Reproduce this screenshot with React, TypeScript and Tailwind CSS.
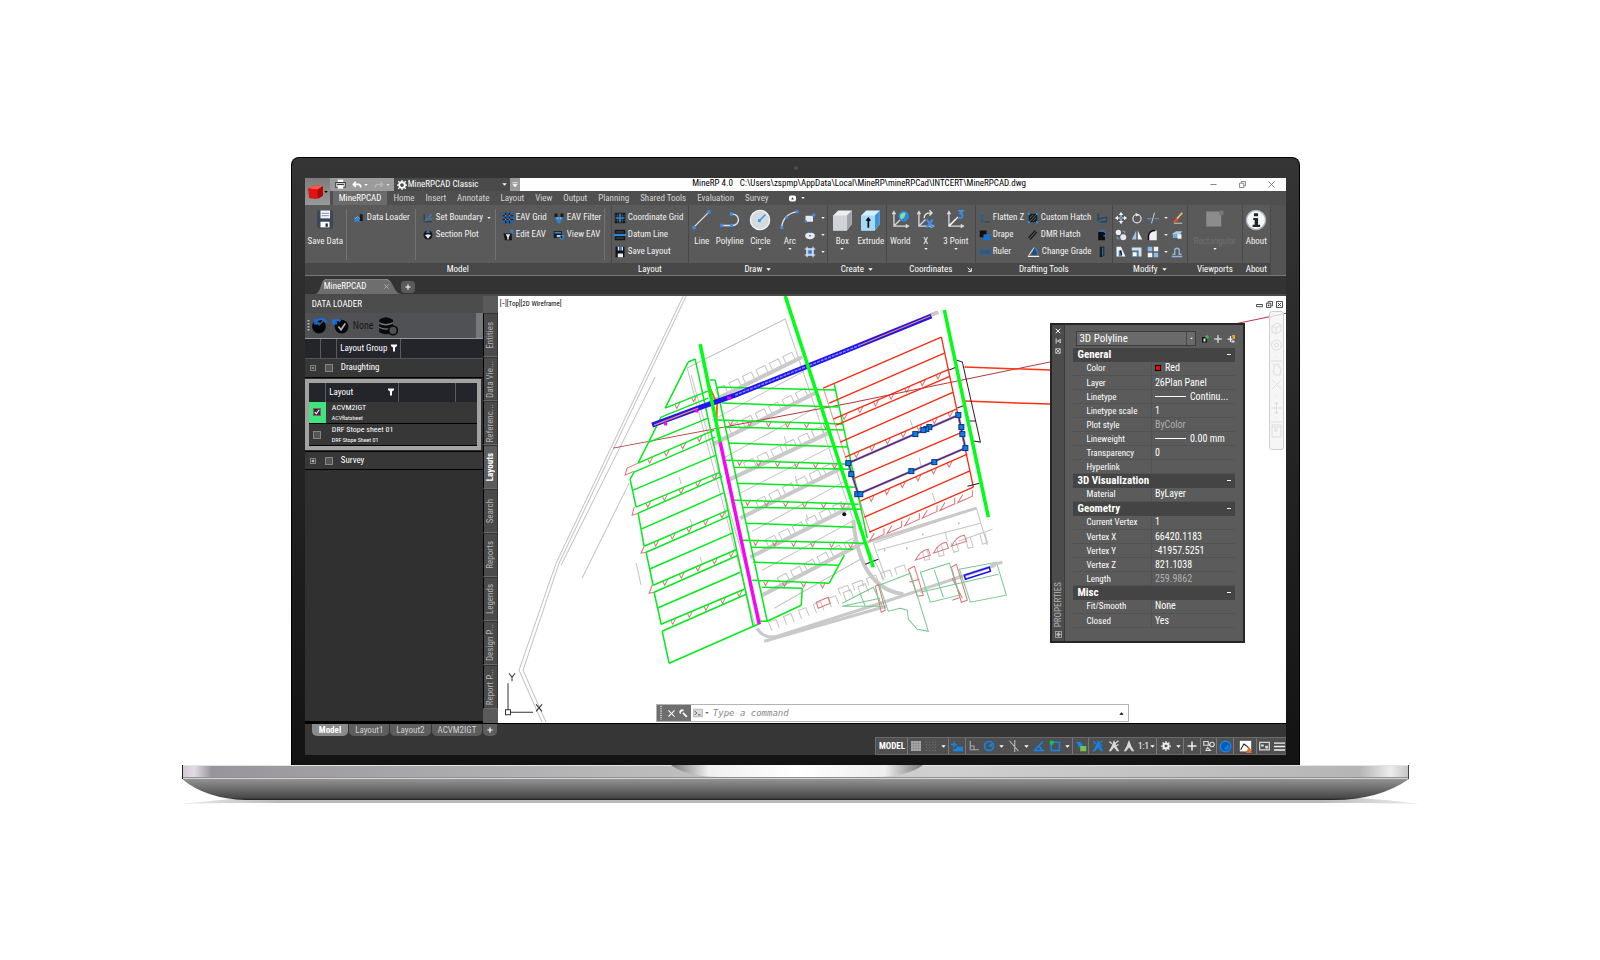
import type { ReactNode } from "react";

type Kids = { children: ReactNode };

/* ---------- small drawing helpers ---------- */

function Icon({ children, className = "size-[12px]" }: Kids & { className?: string }) {
  return (
    <svg viewBox="0 0 16 16" className={`shrink-0 ${className}`} fill="none" aria-hidden="true">
      {children}
    </svg>
  );
}

const Caret = ({ className = "size-[5px]" }: { className?: string }) => (
  <Icon className={className}>
    <path d="M1 4h14l-7 8z" fill="currentColor" />
  </Icon>
);

const BLUE = "#2f86d6";

/* ---------- ribbon icons ---------- */

const SaveBig = () => (
  <Icon className="h-[21px] w-[18px]">
    <path d="M1 0h14v16H2.500l-1.500-1.500z" fill="#3b4658" />
    <path d="M4 0h8.500v7H4z" fill="#f1f4f8" />
    <path d="M5 2.500h6.500M5 4.500h6.500" stroke="#9aa6b5" />
    <path d="M4 10h8v5H4z" fill="#fff" />
    <path d="M8.500 11.500h2v3h-2z" fill="#1d2430" />
  </Icon>
);
const DataLoad = () => (
  <Icon>
    <path d="M2 7h7v6H2z" fill={BLUE} />
    <path d="M9 3h4v9H9z" fill="#1b1b1b" />
    <path d="M3 9l3-3 3 3" stroke="#8cc4f5" />
  </Icon>
);
const Boundary = () => (
  <Icon>
    <path d="M3 3v10h10" stroke="#3a4149" strokeWidth="2" />
    <path d="M4 12l4-4M9 7l4-4M10 8l3 2" stroke={BLUE} strokeWidth="1.500" />
  </Icon>
);
const Section = () => (
  <Icon>
    <circle cx="8" cy="8" r="6" fill="#151515" />
    <path d="M8 1l3 4H5z" fill={BLUE} />
    <path d="M4 8l4 5 4-5-4-1z" fill="#e8eef4" />
  </Icon>
);
const EavGrid = () => (
  <Icon>
    <path d="M1 1h14v14H1z" fill="#1665b5" />
    <path d="M1 5h14M1 10h14M5 1v14M10 1v14" stroke="#15181c" strokeWidth="1.500" />
    <path d="M4 4h2v2H4zM9 9h2v2H9zM9 4h2v2H9zM4 9h2v2H4z" fill="#e0743a" />
  </Icon>
);
const EavFilter = () => (
  <Icon>
    <path d="M2 2h4v5H2zM10 2h4v5h-4z" fill="#1c1c1c" />
    <path d="M3 7h10v2l-3 3v3H6v-3L3 9z" fill={BLUE} />
    <path d="M5 8h2M9 8h2" stroke="#fff" />
  </Icon>
);
const EditEav = () => (
  <Icon>
    <path d="M2 6h11v9H4z" fill="#121212" />
    <path d="M5 7h6l-2 4v3H7v-3z" fill="#e9eef3" />
    <path d="M10 1h5v5h-2z" fill={BLUE} />
  </Icon>
);
const ViewEav = () => (
  <Icon>
    <path d="M1 3h11v9H1z" fill="#16191d" />
    <path d="M2 5h9" stroke={BLUE} strokeWidth="2" />
    <path d="M5 8h6l-2 3H5z" fill="#bfcad6" />
    <circle cx="12" cy="11" r="2.500" stroke={BLUE} strokeWidth="1.500" />
  </Icon>
);
const CoordGrid = () => (
  <Icon>
    <path d="M1 1h14v14H1z" fill="#14171b" />
    <path d="M1 5h14M1 11h14M5 1v14M11 1v14" stroke="#46505a" />
    <path d="M8 2v12M2 8h12" stroke={BLUE} strokeWidth="2" />
  </Icon>
);
const Datum = () => (
  <Icon>
    <path d="M1 1h14v14H1z" fill="#14171b" />
    <path d="M3 4h10M3 12h10" stroke="#56616c" />
    <path d="M0 8h16" stroke={BLUE} strokeWidth="3" />
  </Icon>
);
const SaveSmall = () => (
  <Icon>
    <path d="M2 1h12v14H2z" fill="#111" />
    <path d="M5 1h2v5H5zM10 1h2v5h-2zM5 10h7v5H5z" fill="#e8edf2" />
    <path d="M7 1h3v5H7z" fill={BLUE} />
  </Icon>
);
const LineI = () => (
  <Icon className="size-[21px]">
    <path d="M2 14L14 2" stroke="#dfe5ea" />
    <path d="M1 13h2.500v2.500H1zM12.500 1H15v2.500h-2.500z" fill="#3d8ef0" />
  </Icon>
);
const PolyI = () => (
  <Icon className="size-[21px]">
    <path d="M2 12.500h8.500a4.300 4.300 0 0 0 0-8.600H9" stroke="#dfe5ea" strokeWidth="1.100" />
    <path d="M1 11.300h2.400v2.400H1zM8.300 11.300h2.400v2.400H8.300zM8.300 2.700h2.400v2.400H8.300z" fill="#3d8ef0" />
  </Icon>
);
const CircleI = () => (
  <Icon className="size-[22px]">
    <circle cx="8" cy="8" r="7" fill="#d5dade" stroke="#f2f4f5" />
    <path d="M7.500 8.500L12 4" stroke="#3d8ef0" strokeWidth="1.100" />
    <path d="M6.500 7.500h2v2h-2z" fill="#3d8ef0" />
  </Icon>
);
const ArcI = () => (
  <Icon className="size-[21px]">
    <path d="M2 14.500C2.500 7.500 7 3 14 2" stroke="#dfe5ea" strokeWidth="1.100" />
    <path d="M1 13h2.300v2.300H1zM12.700 1H15v2.300h-2.300zM4.800 5.500h2v2h-2z" fill="#3d8ef0" />
  </Icon>
);
const RectI = () => (
  <Icon>
    <path d="M2 5h10v8H2z" fill="#e7ebee" />
    <path d="M11 2h4v4h-4zM1 11h3v3H1z" fill="#3d8ef0" />
  </Icon>
);
const EllipseI = () => (
  <Icon>
    <ellipse cx="8" cy="9" rx="6.500" ry="4.500" fill="#e7ebee" />
    <path d="M6.500 2h3v3h-3zM7 8h2v2H7z" fill="#2d6fb8" />
  </Icon>
);
const HatchI = () => (
  <Icon>
    <path d="M3 3h10v10H3z" fill="#8bb8e8" />
    <path d="M4 1v14M12 1v14M1 4h14M1 12h14" stroke="#dfe9f5" strokeWidth="1.500" />
    <path d="M6 6h4v4H6z" fill="#3277c4" />
  </Icon>
);
const BoxI = () => (
  <Icon className="size-[23px]">
    <path d="M1.500 4.500L5 1h9.500v9.500L11 15H1.500z" fill="#eceef0" />
    <path d="M11 15V4.500L14.500 1v9.500z" fill="#9fa3a8" />
    <path d="M1.500 4.500H11V15H1.500z" fill="#cfd2d7" />
  </Icon>
);
const ExtrudeI = () => (
  <Icon className="size-[23px]">
    <path d="M1.500 4.500L5 1h9.500v9.500L11 15H1.500z" fill="#d6efff" />
    <path d="M11 15V4.500L14.500 1v9.500z" fill="#3f96d6" />
    <path d="M1.500 4.500H11V15H1.500z" fill="#a4d8f8" />
    <path d="M6.500 13V6.500M5.200 8.200l1.300-1.700 1.300 1.700" stroke="#0b0b0b" strokeWidth="1.200" />
  </Icon>
);
const Axes = ({ children }: Kids) => (
  <Icon className="size-[21px]">
    <path d="M3 2v11h11M3 13l5-5M1.800 4L3 2l1.200 2M12 11.800L14 13l-2 1.200" stroke="#d6d9dc" />
    {children}
  </Icon>
);
const WorldI = () => (
  <Axes>
    <circle cx="10.500" cy="5.500" r="4" fill="#2f86d6" />
    <path d="M8 4q2-2 4-1l-1 3-2 2q-2-1-1-4z" fill="#7fe0a8" />
  </Axes>
);
const XI = () => (
  <Axes>
    <path d="M7 7c0-4 3-4 5-4M11 1l2 2-2 2" stroke="#e5e7e9" />
    <path d="M9 8l4.500 6M13.500 8L9 14" stroke="#3d8ef0" strokeWidth="1.600" />
  </Axes>
);
const ThreeI = () => (
  <Axes>
    <path d="M3 13l7-7" stroke="#fff" />
    <path d="M10 1.500h3.500l-2 2q2.500.5 1.800 2.300-1 1.700-3.500.7" stroke="#3d8ef0" strokeWidth="1.300" />
  </Axes>
);
const FlattenI = () => (
  <Icon>
    <path d="M4 2v11h10" stroke="#3b434b" strokeWidth="2" />
    <path d="M2 2h4M4 3v8M3 13h6" stroke="#2a6ca8" strokeWidth="1.500" />
  </Icon>
);
const DrapeI = () => (
  <Icon>
    <path d="M1 2h9v9H1z" fill="#0e0e0e" />
    <path d="M6 7h9v8H6z" fill="#1673d0" />
  </Icon>
);
const RulerI = () => (
  <Icon>
    <path d="M1 4.500h14v7H1z" fill="#4c5258" stroke="#2266a3" strokeWidth="1.800" />
  </Icon>
);
const CustomHatchI = () => (
  <Icon>
    <path d="M3 3h10v10H3z" fill="#20242a" stroke="#0e0f10" />
    <path d="M4 12l8-8M4 8l4-4M8 12l4-4" stroke="#5a6672" />
    <path d="M1 1h3v3H1zM12 1h3v3h-3zM1 12h3v3H1zM12 12h3v3h-3z" fill={BLUE} />
  </Icon>
);
const DmrI = () => (
  <Icon>
    <path d="M3 13L12 3" stroke="#1b1b1b" strokeWidth="4.500" />
    <path d="M3 13L12 3" stroke="#6c737a" strokeWidth="1.200" />
  </Icon>
);
const GradeI = () => (
  <Icon className="size-[13px]">
    <path d="M1 14h14" stroke="#f0f2f4" strokeWidth="1.500" />
    <path d="M2 13L9 3" stroke="#dfe3e6" strokeWidth="1.300" />
    <path d="M9 3q4 3 4 9H6z" fill="#1d4d7c" />
    <path d="M9 3q4 3 4 9" stroke={BLUE} strokeWidth="1.500" />
  </Icon>
);
const SlopeI = () => (
  <Icon>
    <path d="M3 2v11h11V7L4 9" stroke="#23425f" strokeWidth="1.800" />
    <path d="M1 13h6M10 9h4" stroke="#2a6ca8" strokeWidth="1.500" />
  </Icon>
);
const BucketI = () => (
  <Icon>
    <path d="M3 4h9v11H3z" fill="#0d0d0d" />
    <path d="M5 3q4-3 7 2M10 9h3" stroke="#1d7be0" strokeWidth="1.800" />
  </Icon>
);
const PanelI = () => (
  <Icon>
    <path d="M5 1h6v12l-4 2H5z" fill="#1a1d20" />
    <path d="M9 2v11" stroke="#2f7f9e" strokeWidth="1.500" />
  </Icon>
);

const MoveI = () => (
  <Icon>
    <path d="M8 1v14M1 8h14" stroke="#e6e9ec" strokeWidth="1.300" />
    <path d="M8 0l3 4H5zM8 16l3-4H5zM0 8l4-3v6zM16 8l-4-3v6z" fill="#f3f5f6" />
    <path d="M6.500 6.500h3v3h-3z" fill="#3d8ef0" />
  </Icon>
);
const RotateI = () => (
  <Icon>
    <circle cx="8" cy="9" r="5.500" stroke="#d9dde0" strokeWidth="1.700" />
    <path d="M6 1l5 2.500L7 6z" fill="#e9ecee" />
  </Icon>
);
const TrimI = () => (
  <Icon>
    <path d="M0 9h6M10 9h6" stroke="#4aa0f0" strokeWidth="1.500" />
    <path d="M10 1L6 15" stroke="#cfd6dc" strokeWidth="1.300" />
  </Icon>
);
const EraseI = () => (
  <Icon>
    <path d="M15 1L7 10" stroke="#f0c070" strokeWidth="2.500" />
    <path d="M7 8l3 3-4 3H2z" fill="#e8482c" />
    <path d="M4 15h11" stroke="#f0f0f0" />
  </Icon>
);
const CopyI = () => (
  <Icon>
    <circle cx="4.500" cy="4.500" r="3.500" fill="#eceff1" />
    <circle cx="11" cy="11" r="4" fill="#e2e8ee" />
    <path d="M10 3h3v3M3 10v3h3" stroke="#8fb8e0" />
  </Icon>
);
const MirrorI = () => (
  <Icon>
    <path d="M7 2v12H1z" fill="#9fc6ea" />
    <path d="M9 2v12h6z" fill="#eef2f5" />
  </Icon>
);
const FilletI = () => (
  <Icon>
    <path d="M2 15V9q1-7 9-7h2v13z" fill="#eef1f3" />
    <path d="M2 15V9q1-7 9-7" stroke="#111" strokeWidth="2" />
  </Icon>
);
const ExplodeI = () => (
  <Icon>
    <path d="M2 6l5-3h8l-3 4v5H3z" fill="#a9cdec" />
    <path d="M9 7h5v6H9z" fill="#eaf2f9" />
    <path d="M3 7h5v5H3z" fill="#6aa8de" />
  </Icon>
);
const StretchI = () => (
  <Icon>
    <path d="M2 1h6l6 13H2z" fill="#f0f3f5" />
    <path d="M5 6h4v8H5z" fill="#3a7fc4" />
    <path d="M7 6l2 6" stroke="#101010" strokeWidth="1.500" />
  </Icon>
);
const ScaleI = () => (
  <Icon>
    <path d="M1 2h13v12h-4V6H1z" fill="#cfe2f3" />
    <path d="M2 8h6v6H2z" fill="#fff" stroke="#5b9bd8" />
  </Icon>
);
const ArrayI = () => (
  <Icon>
    <path d="M1 1h6v6H1zM9 9h6v6H9z" fill="#86bdf0" />
    <path d="M9 1h6v6H9zM1 9h6v6H1z" fill="#f0f3f5" />
  </Icon>
);
const OffsetI = () => (
  <Icon>
    <path d="M1 14h14M2 11h3V6a3 3 0 0 1 6 0v5h3" stroke="#8fb8e0" strokeWidth="1.800" />
  </Icon>
);
const ViewportI = () => (
  <Icon className="size-[20px]">
    <path d="M1 2h12v12H1z" fill="#8c8c8c" />
    <circle cx="13" cy="3" r="2" fill="#777" />
  </Icon>
);
const AboutI = () => (
  <Icon className="size-[22px]">
    <circle cx="8" cy="8" r="7" fill="#f4f6f7" stroke="#aab2b9" />
    <path d="M6.500 3h3v2.200h-3zM6 6.500h3.500v5H11V13H5.500v-1.500H7V8H6z" fill="#20262c" />
  </Icon>
);

/* ---------- ribbon structure ---------- */

function Group({ label, arrow, launcher, className, children }: Kids & { label: string; arrow?: boolean; launcher?: boolean; className: string }) {
  return (
    <section className={`flex shrink-0 flex-col border-r border-[#484848] ${className}`}>
      <div className="flex h-[58px] pt-[4px]">{children}</div>
      <h2 className="relative flex h-[12px] items-center justify-center gap-1 bg-[#484848] text-white">
        {label}
        {arrow && <Caret />}
        {launcher && (
          <Icon className="absolute right-[3px] size-[5px]">
            <path d="M2 2l10 10M14 4v10H4" stroke="#fff" strokeWidth="3" />
          </Icon>
        )}
      </h2>
    </section>
  );
}

function Small({ icon, label, arrow }: { icon: ReactNode; label: string; arrow?: boolean }) {
  return (
    <button className="flex h-[17px] items-center gap-[2px] whitespace-nowrap">
      {icon}
      {label}
      {arrow && <Caret className="ml-[2px] size-[4px]" />}
    </button>
  );
}

function Big({ icon, label, arrow, className, dim = false }: { icon: ReactNode; label: string; arrow?: boolean; className: string; dim?: boolean }) {
  return (
    <button className={`flex flex-col items-center ${className}`}>
      <span className="flex h-[27px] items-start">{icon}</span>
      <span className={dim ? "text-[#6f6f6f]" : ""}>{label}</span>
      {arrow && <Caret className="size-[4px]" />}
    </button>
  );
}

const Divider = () => <span className="mb-[3px] w-px shrink-0 bg-[#737373]" />;

function IconButton({ name, children, arrow }: Kids & { name: string; arrow?: boolean }) {
  return (
    <button aria-label={name} className="flex h-[17px] items-center gap-[5px]">
      {children}
      {arrow && <Caret className="size-[4px]" />}
    </button>
  );
}

function Ribbon() {
  return (
    <div className="flex h-[71px] overflow-hidden border-b border-[#787878] bg-[#5a5a5a] text-[#f2f2f2]">
      <Group label="Model" className="w-[307px]">
        <Big icon={<SaveBig />} label="Save Data" className="w-[41px]" />
        <Divider />
        <div className="w-[68px] pl-[6px]">
          <Small icon={<DataLoad />} label="Data Loader" />
        </div>
        <Divider />
        <div className="w-[79px] pl-[6px]">
          <Small icon={<Boundary />} label="Set Boundary" arrow />
          <Small icon={<Section />} label="Section Plot" />
        </div>
        <Divider />
        <div className="grid w-[108px] grid-cols-[51px_1fr] content-start pl-[6px]">
          <Small icon={<EavGrid />} label="EAV Grid" />
          <Small icon={<EavFilter />} label="EAV Filter" />
          <Small icon={<EditEav />} label="Edit EAV" />
          <Small icon={<ViewEav />} label="View EAV" />
        </div>
        <Divider />
      </Group>
      <Group label="Layout" className="w-[77px]">
        <div className="pl-[2px]">
          <Small icon={<CoordGrid />} label="Coordinate Grid" />
          <Small icon={<Datum />} label="Datum Line" />
          <Small icon={<SaveSmall />} label="Save Layout" />
        </div>
      </Group>
      <Group label="Draw" arrow className="w-[139px]">
        <Big icon={<LineI />} label="Line" className="w-[26px]" />
        <Big icon={<PolyI />} label="Polyline" className="w-[30px]" />
        <Big icon={<CircleI />} label="Circle" arrow className="w-[31px]" />
        <Big icon={<ArcI />} label="Arc" arrow className="w-[28px]" />
        <div>
          <IconButton name="Rectangle" arrow><RectI /></IconButton>
          <IconButton name="Ellipse" arrow><EllipseI /></IconButton>
          <IconButton name="Hatch" arrow><HatchI /></IconButton>
        </div>
      </Group>
      <Group label="Create" arrow className="w-[59px]">
        <Big icon={<BoxI />} label="Box" arrow className="w-[29px]" />
        <Big icon={<ExtrudeI />} label="Extrude" className="w-[28px]" />
      </Group>
      <Group label="Coordinates" launcher className="w-[89px]">
        <Big icon={<WorldI />} label="World" className="w-[27px]" />
        <Big icon={<XI />} label="X" arrow className="w-[24px]" />
        <Big icon={<ThreeI />} label="3 Point" arrow className="w-[36px]" />
      </Group>
      <Group label="Drafting Tools" className="w-[137px]">
        <div className="w-[51px] pl-[3px]">
          <Small icon={<FlattenI />} label="Flatten Z" />
          <Small icon={<DrapeI />} label="Drape" />
          <Small icon={<RulerI />} label="Ruler" />
        </div>
        <div className="w-[69px]">
          <Small icon={<CustomHatchI />} label="Custom Hatch" />
          <Small icon={<DmrI />} label="DMR Hatch" />
          <Small icon={<GradeI />} label="Change Grade" />
        </div>
        <div>
          <IconButton name="Slope"><SlopeI /></IconButton>
          <IconButton name="Fill"><BucketI /></IconButton>
          <IconButton name="Panel"><PanelI /></IconButton>
        </div>
      </Group>
      <Group label="Modify" arrow className="w-[75px]">
        <div className="grid grid-cols-[16px_16px_24px_13px] content-start pl-[2px]">
          <IconButton name="Move"><MoveI /></IconButton>
          <IconButton name="Rotate"><RotateI /></IconButton>
          <IconButton name="Trim" arrow><TrimI /></IconButton>
          <IconButton name="Erase"><EraseI /></IconButton>
          <IconButton name="Copy"><CopyI /></IconButton>
          <IconButton name="Mirror"><MirrorI /></IconButton>
          <IconButton name="Fillet" arrow><FilletI /></IconButton>
          <IconButton name="Explode"><ExplodeI /></IconButton>
          <IconButton name="Stretch"><StretchI /></IconButton>
          <IconButton name="Scale"><ScaleI /></IconButton>
          <IconButton name="Array" arrow><ArrayI /></IconButton>
          <IconButton name="Offset"><OffsetI /></IconButton>
        </div>
      </Group>
      <Group label="Viewports" className="w-[55px]">
        <Big icon={<ViewportI />} label="Rectangular" arrow dim className="w-full" />
      </Group>
      <Group label="About" className="w-[28px]">
        <Big icon={<AboutI />} label="About" className="w-full" />
      </Group>
      <div className="flex-1 bg-[#545454]" />
    </div>
  );
}

/* ---------- title and menus ---------- */

const MENUS = ["Home", "Insert", "Annotate", "Layout", "View", "Output", "Planning", "Shared Tools", "Evaluation", "Survey"];

function Header() {
  return (
    <header className="flex">
      <button aria-label="Application menu" className="flex h-[27px] w-[25px] shrink-0 items-center bg-linear-to-b from-[#7c7c7c] to-[#9a9a9a] pl-[2px]">
        <Icon className="size-[17px]">
          <path d="M1 5l7-3 7 1v9l-7 3-6-1z" fill="#e01212" />
          <path d="M1 5l7-3 7 1-5 3z" fill="#ff5a4a" />
          <path d="M10 6l5-3v9l-5 3z" fill="#a80808" />
        </Icon>
        <Caret className="size-[4px] text-black" />
      </button>
      <div className="min-w-0 flex-1">
        <div className="flex h-[13px] bg-white">
          <div className="flex w-[64px] items-center justify-between bg-[#9b9b9b] pr-[4px] pl-[5px] text-white">
            <button aria-label="Print">
              <Icon className="size-[11px]">
                <path d="M4 1h8v5H4z" fill="#fff" />
                <path d="M1 5h14v7H1z" fill="#e8e8e8" stroke="#3a3f45" strokeWidth="1.500" />
                <path d="M3 8h10" stroke="#3a3f45" strokeWidth="2" />
                <path d="M4 9h8v5H4z" fill="#fff" />
              </Icon>
            </button>
            <button aria-label="Undo" className="flex items-center gap-[2px]">
              <Icon className="size-[10px]">
                <path d="M2 7h8q4 0 4 5M6 3L2 7l4 4" stroke="#fff" strokeWidth="2.500" />
              </Icon>
              <Caret className="size-[4px]" />
            </button>
            <button aria-label="Redo" className="flex items-center gap-[2px] text-[#ddd]">
              <Icon className="size-[10px]">
                <path d="M14 7H6q-4 0-4 5M10 3l4 4-4 4" stroke="#b9b9b9" strokeWidth="2" />
              </Icon>
              <Caret className="size-[4px]" />
            </button>
          </div>
          <label className="flex w-[116px] items-center gap-px bg-[#4a4a4a] px-[3px] text-white">
            <Icon className="size-[10px]">
              <circle cx="8" cy="8" r="4.500" stroke="#fff" strokeWidth="3" />
              <path d="M8 0v3M8 13v3M0 8h3M13 8h3M2 2l2 2M12 12l2 2M14 2l-2 2M2 14l2-2" stroke="#fff" strokeWidth="2" />
            </Icon>
            <select aria-label="Workspace" className="min-w-0 flex-1 appearance-none bg-transparent text-white">
              <option>MineRPCAD Classic</option>
            </select>
            <Caret />
          </label>
          <button aria-label="Customise toolbar" className="flex w-[10px] items-center justify-center bg-[#9b9b9b] text-white">
            <Icon className="size-[6px]">
              <path d="M1 2h14" stroke="#fff" strokeWidth="2" />
              <path d="M1 6h14l-7 8z" fill="#fff" />
            </Icon>
          </button>
          <p className="flex flex-1 items-start justify-center gap-[7px] text-black">
            <span>MineRP 4.0</span>
            <span>C:\Users\zspmp\AppData\Local\MineRP\mineRPCad\INTCERT\MineRPCAD.dwg</span>
          </p>
          <div className="flex w-[88px] items-center justify-around text-[#777]">
            <button aria-label="Minimize">
              <Icon className="size-[7px]"><path d="M1 8h14" stroke="currentColor" strokeWidth="2" /></Icon>
            </button>
            <button aria-label="Restore">
              <Icon className="size-[7px]"><path d="M1 5h10v10H1zM5 4V1h10v10h-3" stroke="currentColor" strokeWidth="2" /></Icon>
            </button>
            <button aria-label="Close">
              <Icon className="size-[7px]"><path d="M1 1l14 14M15 1L1 15" stroke="currentColor" strokeWidth="2" /></Icon>
            </button>
          </div>
        </div>
        <nav className="flex h-[14px] items-center gap-[11px] bg-[#4f4f4f] text-[#d4d4d4]">
          <a href="#minerpcad" className="-mr-[5px] ml-[3px] flex h-full items-center bg-[#6a6a6a] px-[6px] text-white">
            MineRPCAD
          </a>
          {MENUS.map((m) => (
            <a key={m} href={`#${m}`} className="whitespace-nowrap">{m}</a>
          ))}
          <button aria-label="Ribbon display" className="ml-[8px] flex items-center gap-1 text-white">
            <Icon className="h-[7px] w-[9px]">
              <rect x="0" y="1" width="16" height="14" rx="4" fill="#fff" />
              <path d="M8 5l3 5H5z" fill="#333" />
            </Icon>
            <Caret className="size-[4px]" />
          </button>
        </nav>
      </div>
    </header>
  );
}

/* ---------- data loader panel ---------- */

const Funnel = () => (
  <Icon className="size-[8px]">
    <path d="M2 1h12v3l-4 3v8H6V7L2 4z" fill="#fff" />
  </Icon>
);
const Expander = ({ open, name }: { open?: boolean; name: string }) => (
  <button aria-label={`Toggle ${name}`} className="mx-auto block size-[6px]">
    <Icon className="size-[6px]">
      <path d="M1 1h14v14H1z" stroke="#a8a8a8" strokeWidth="2" />
      <path d={open ? "M4 8h8" : "M4 8h8M8 4v8"} stroke="#fff" strokeWidth="2" />
    </Icon>
  </button>
);
const Tick = ({ name, on }: { name: string; on?: boolean }) => (
  <label className="mx-auto grid size-[8px] place-items-center">
    <input
      type="checkbox"
      aria-label={name}
      defaultChecked={on}
      className="peer col-start-1 row-start-1 size-[8px] appearance-none border border-[#858585] bg-[#555] checked:border-[#8a5a72] checked:bg-[#3a2833]"
    />
    <Icon className="invisible col-start-1 row-start-1 size-[6px] peer-checked:visible">
      <path d="M2 8l4 5 8-11" stroke="#fff" strokeWidth="3" />
    </Icon>
  </label>
);

const SHEETS = [
  { name: "ACVM2IGT", sub: "ACVflatsheet", on: true },
  { name: "DRF Stope sheet 01", sub: "DRF Stope Sheet 01", on: false },
];

function DataLoader() {
  return (
    <aside className="flex w-[178px] shrink-0 flex-col border-b-2 border-black bg-[#303030] text-white">
      <h1 className="flex h-[17px] items-center bg-[#4c4c4c] pl-[7px]">DATA LOADER</h1>
      <div className="flex h-[26px] items-center gap-[4px] border-b border-[#999] bg-[#505154] pl-[2px] text-[#161616]">
        <Icon className="-mr-[3px] h-[14px] w-[3px]">
          <path d="M8 -24v64" stroke="#bbb" strokeWidth="10" strokeDasharray="8 8" />
        </Icon>
        <button aria-label="Load">
          <Icon className="size-[17px]">
            <circle cx="7.500" cy="9" r="6.500" fill="#080808" />
            <path d="M7 8l6-6" stroke="#505154" strokeWidth="1.500" />
            <path d="M5 4q5-5 10 1M4 2v4h4" stroke="#1272dc" strokeWidth="2" />
          </Icon>
        </button>
        <button aria-label="Apply">
          <Icon className="size-[17px]">
            <circle cx="9" cy="9" r="6.500" fill="#080808" />
            <path d="M6 9l2.500 3 4-6" stroke="#b5b5b5" strokeWidth="1.600" />
            <path d="M1 6q2-5 7-2M1 2v4h4" stroke="#1272dc" strokeWidth="2" />
          </Icon>
        </button>
        <span className="text-[10px]">None</span>
        <button aria-label="Refresh data">
          <Icon className="size-[20px]">
            <path d="M1 3q5-4 11 0v10q-5 3-11 0z" fill="#0a0a0a" />
            <path d="M1 5.500q5 3 11 0M1 9q5 3 11 0" stroke="#777" />
            <circle cx="12" cy="11.500" r="3.500" fill="#505154" stroke="#0a0a0a" strokeWidth="1.300" />
          </Icon>
        </button>
        <span className="ml-auto h-full w-[7px] bg-[#77787a]" />
      </div>
      <table className="w-full table-fixed border-collapse">
        <colgroup>
          <col className="w-[16px]" />
          <col className="w-[16px]" />
          <col className="w-[64px]" />
          <col />
        </colgroup>
        <thead>
          <tr className="h-[19px] border-b border-[#555] bg-[#24252b]">
            <th aria-label="Expand" className="border-r border-[#5c5c5c]" />
            <th aria-label="Select" className="border-r border-[#5c5c5c]" />
            <th className="border-r border-[#5c5c5c] p-0 font-normal">
              <span className="flex items-center justify-between pr-[2px] pl-[3px]">Layout Group <Funnel /></span>
            </th>
            <th aria-label="Details" />
          </tr>
        </thead>
        <tbody>
          <tr className="h-[19px] border-b border-black bg-[#373737]">
            <td className="p-0"><Expander open name="Draughting" /></td>
            <td className="p-0"><Tick name="Draughting" /></td>
            <td className="p-0 pl-[4px]" colSpan={2}>Draughting</td>
          </tr>
          <tr>
            <td colSpan={4} className="p-0 py-px">
              <div className="mr-[2px] border-4 border-[#a2a2a2]">
                <table className="w-full table-fixed border-collapse">
                  <colgroup>
                    <col className="w-[17px]" />
                    <col className="w-[73px]" />
                    <col className="w-[57px]" />
                    <col />
                  </colgroup>
                  <thead>
                    <tr className="h-[19px] bg-[#24252b]">
                      <th aria-label="Select" className="border-r border-[#5c5c5c]" />
                      <th className="border-r border-[#5c5c5c] p-0 font-normal">
                        <span className="flex items-center justify-between pr-[3px] pl-[3px]">Layout <Funnel /></span>
                      </th>
                      <th aria-label="Scale" className="border-r border-[#5c5c5c]" />
                      <th aria-label="State" />
                    </tr>
                  </thead>
                  <tbody>
                    {SHEETS.map((s) => (
                      <tr key={s.name} className="h-[22px] border-b border-black bg-[#373737]">
                        <td className={s.on ? "bg-[#3ee57c] p-0" : "p-0"}><Tick name={s.name} on={s.on} /></td>
                        <td colSpan={3} className="p-0 pl-[6px]">
                          <p className="text-[8px] leading-[10px]">{s.name}</p>
                          <p className="text-[6px] leading-[9px]">{s.sub}</p>
                        </td>
                      </tr>
                    ))}
                  </tbody>
                </table>
              </div>
            </td>
          </tr>
          <tr className="h-[18px] border-y border-black bg-[#373737]">
            <td className="p-0"><Expander name="Survey" /></td>
            <td className="p-0"><Tick name="Survey" /></td>
            <td className="p-0 pl-[4px]" colSpan={2}>Survey</td>
          </tr>
        </tbody>
      </table>
    </aside>
  );
}

const SIDE_TABS = ["Entities", "Data Vie...", "Referenc...", "Layouts", "Search", "Reports", "Legends", "Design P...", "Report P..."];

function SideTabs() {
  return (
    <div role="tablist" className="flex w-[15px] shrink-0 flex-col bg-[#5a5a5a] pt-[17px]">
      {SIDE_TABS.map((t) => (
        <button
          key={t}
          role="tab"
          aria-selected={t === "Layouts"}
          className="flex h-[44px] items-center justify-center border border-l-black border-t-[#333] border-r-[#333] border-b-[#6a6a6a] bg-[#4a4a4a] text-[#b4b4b4] aria-selected:bg-[#5c5c5c] aria-selected:font-bold aria-selected:text-white"
        >
          <span className="rotate-180 text-[9px] whitespace-nowrap [writing-mode:vertical-rl]">{t}</span>
        </button>
      ))}
    </div>
  );
}

/* ---------- drawing ---------- */

type Seg = [number, number, number, number];

const lines = (segs: Seg[]) => segs.map(([a, b, c, d]) => `M${a} ${b}L${c} ${d}`).join("");

/* Row of open boxes standing on a base line; a negative height hangs them below it. */
function teeth([x1, y1, x2, y2]: Seg, w: number, gap: number, h: number) {
  const len = Math.hypot(x2 - x1, y2 - y1);
  const ux = (x2 - x1) / len;
  const uy = (y2 - y1) / len;
  let d = "";
  for (let t = gap / 2; t + w < len; t += w + gap) {
    const bx = x1 + ux * t;
    const by = y1 + uy * t;
    d += `M${bx} ${by}l${uy * h} ${-ux * h}l${ux * w} ${uy * w}l${-uy * h} ${ux * h}`;
  }
  return d;
}

/* Slanted trays hanging below a base line. */
function trays([x1, y1, x2, y2]: Seg, count: number) {
  const dx = (x2 - x1) / count;
  const dy = (y2 - y1) / count;
  let d = "";
  for (let i = 0; i < count; i++) {
    const bx = x1 + dx * i;
    const by = y1 + dy * i;
    d += `M${bx + 5} ${by - 2}l-5 8l${dx - 3} ${dy + 1}l0 -6`;
  }
  return d;
}

/* Small V marks below a base line. */
function vees([x1, y1, x2, y2]: Seg, step: number) {
  const len = Math.hypot(x2 - x1, y2 - y1);
  let d = "";
  for (let t = step * 0.7; t < len - 4; t += step) {
    const bx = x1 + ((x2 - x1) * t) / len;
    const by = y1 + ((y2 - y1) * t) / len;
    d += `M${bx - 2} ${by + 1}l2 4l3 -6`;
  }
  return d;
}

const LEFT_PANELS: Seg[] = [
  [665, 408, 710, 390], [661, 417, 708, 398], [649, 442, 708, 418], [638, 463, 714, 430],
  [634, 472, 715, 437], [633, 490, 716, 455], [636, 507, 720, 472], [638, 513, 722, 476],
  [641, 529, 723, 493], [644, 546, 728, 510], [646, 552, 729, 516], [649, 569, 732, 533],
  [653, 585, 737, 549], [654, 592, 738, 555], [657, 608, 740, 572], [661, 624, 744, 589],
  [662, 631, 746, 594], [669, 663, 760, 623],
];
const LEFT_EDGES: Seg[] = [
  [665, 408, 688, 362], [688, 362, 695, 359], [695, 359, 753, 626], [661, 417, 638, 463],
  [634, 472, 630, 479], [630, 479, 636, 507], [638, 513, 644, 546], [646, 552, 653, 585],
  [654, 592, 661, 624], [662, 631, 669, 663], [710, 380, 715, 380], [715, 380, 767, 621],
  [760, 621, 767, 621], [767, 621, 801, 605], [801, 605, 802, 588], [834, 384, 867, 538],
  [844, 555, 829, 583],
];
const MID_PANELS: Seg[] = [
  [717, 387, 835, 390], [722, 403, 838, 407], [717, 420, 842, 424], [725, 427, 843, 430],
  [729, 443, 847, 447], [726, 460, 850, 464], [733, 467, 851, 469], [737, 483, 855, 487],
  [734, 500, 858, 504], [742, 507, 860, 509], [746, 523, 853, 527], [742, 540, 864, 543],
  [752, 547, 853, 549], [753, 562, 838, 565], [752, 580, 829, 583], [762, 587, 802, 588],
];
const ROADS: Seg[] = [
  [700, 407, 802, 357], [713, 444, 815, 393], [728, 480, 830, 432],
  [740, 518, 843, 467], [750, 557, 850, 507], [762, 595, 858, 545],
];
const RED_PANELS: Seg[] = [
  [823, 388, 941, 337], [829, 403, 944, 353], [833, 419, 949, 369], [836, 425, 950, 376],
  [840, 442, 953, 392], [845, 457, 956, 409], [852, 479, 962, 432], [860, 501, 967, 454],
  [864, 517, 969, 471], [869, 532, 973, 487], [941, 337, 973, 487],
];
const HANDLES = [
  [848, 463], [851, 474], [857, 494], [860, 494], [911, 471], [934, 462], [965, 448],
  [962, 434], [961, 427], [958, 415], [929, 427], [926, 429], [923, 430], [915, 434],
];

function Drawing() {
  return (
    <svg viewBox="498 296 788 427" className="block h-full w-full" fill="none" role="img" aria-label="Mine plan">
      <g stroke="#c4c4c4">
        <path d="M683 296L556 563 519 670 542 722M686 296L559 563 523 670 546 722M655 377L561 565M629 483L582 578" />
        <path d="M687 368L785 319 853 520M687 368L755 626M691 375L761 622M636 563L641 585" />
        <path d={lines(ROADS.map(([a, b, c, d]) => [a + 12, b + 13, c + 2, d + 14] as Seg))} />
        <path d={ROADS.map((r) => teeth([r[0] + 16, r[1] - 10, r[2], r[3] - 2], 10, 5, 7)).join("")} />
        <path d="M679 477l2 7M690 519l2 7M700 557l2 7M784 436l2 7M795 476l2 7M806 514l2 7M910 420l3 9M919 458l2 9M932 493l3 9M945 532l2 9" />
        <path d={teeth([768, 632, 873, 590], 8, 8, 9)} />
        <path d={teeth([838, 596, 915, 568], 10, 5, 7)} />
        <path d={teeth([917, 552, 988, 532], 5, 10, -10)} />
        <path d="M873 543L976 508 987 545M877 550L980 523M958 541L992 529M868 548l16 32M873 543l12 34" />
        <path d="M906 548h1M922 534h1M958 523h1M884 550h1" strokeWidth="2" stroke="#999" />
      </g>
      <g stroke="#c9c9c9" strokeWidth="4">
        <path d={lines(ROADS)} />
        <path d="M858 545L976 508" strokeWidth="3" />
        <path d="M757 628q6 11 20 8L877 604 995 565" strokeWidth="3" />
        <path d="M764 641L886 606" strokeWidth="3" />
        <path d="M853 520q6 68 50 74" />
        <path d="M930 315l8-3" />
      </g>

      <g stroke="#dd7376">
        <path d={LEFT_PANELS.filter((_, i) => [0, 3, 6, 9, 12, 15].includes(i)).map((s) => vees(s, 18)).join("")} />
        <path d={MID_PANELS.filter((_, i) => [2, 5, 8, 11, 14].includes(i)).map((s) => vees(s, 19)).join("")} />
        <path d={[2, 5, 7].map((i) => vees(RED_PANELS[i], 17)).join("")} />
        <path d="M638 463l-11 5-2 7 9-4M638 513l-6 2 2-8M646 552l-5 1 3-7M654 592l-5 1 3-8" />
        <path d={trays([869, 535, 975, 489], 6)} />
        <path d="M823 388L870 533" stroke="#ef8a8a" />
        <path d="M816 602l12-5 2 6-12 5zM915 560q5-10 13-11l2 6zM933 553q5-10 13-11l2 6zM951 546q5-10 13-11l2 6z" />
        <path d="M878 584l7 26-4 2-6-26zM908 569l6-3 9 29-6 1zM909 582l10-3M951 567l5-3 11 36-6 2zM952 578l10 20M952 600l8-3" />
      </g>

      <g stroke="#79c690">
        <path d="M879 585L910 573 928 631 917 629 908 619 907 610 900 608 888 611zM920 572L949 563 959 595 930 602zM959 569L996 562 1006 595 970 602zM842 603L873 587 882 606 842 606M860 594l5 12M842 606L880 598M934 570l9 27M920 592L998 574" />
      </g>
      <path d="M964 575l25-8 1 4-25 8z" stroke="#1a12ee" strokeWidth="1.500" />
      <path d="M990 565l12-3" stroke="#c9c9c9" strokeWidth="3" />

      <path d="M613 448L850 403 1287 313" stroke="#b5383c" />
      <g stroke="#04ea1c" strokeWidth="1.500">
        <path d={lines([...LEFT_PANELS, ...LEFT_EDGES, ...MID_PANELS])} />
      </g>
      <path d="M709 386l8 18-1 22" stroke="#f06a10" strokeWidth="2" />
      <path d="M652 425L698 408 735 395 790 373 840 353 931 316" stroke="#1f16ee" strokeWidth="5" />
      <path d="M654 425L698 408M860 345L930 316" stroke="#ff8a4a" strokeWidth="1.200" />
      <path d="M735 395L790 373 860 345" stroke="#8a86ff" strokeWidth="1.500" strokeDasharray="3 1" />
      <path d="M664 424h3M695 411h3M727 398h4" stroke="#f0f" strokeWidth="3" />

      <path d={lines(RED_PANELS)} stroke="#f52a10" strokeWidth="1.300" />
      <path d="M964 367L1050 370M964 401L1050 404" stroke="#ff3214" strokeWidth="1.500" />
      <path d="M956 360l6 2 18 80-7-1M949 370l7-3M957 408l8-3M968 421h7M967 486l12-3M865 564l13-5" stroke="#3a1a33" />
      <path d="M848 463L958 415 965 448 858 494z" stroke="#6ea6ee" strokeWidth="2.500" />
      <path d="M848 463L958 415 965 448 858 494z" stroke="#7a1250" strokeWidth="1.200" />

      <g strokeWidth="3.500">
        <path d="M700 344L720 442M785 296L873 567M944 310L988 517" stroke="#00ff14" />
        <path d="M720 442L759 624" stroke="#f508f0" />
      </g>
      <g fill="#0b7df2" stroke="#0a3470">
        {HANDLES.map(([x, y]) => (
          <rect key={`${x}-${y}`} x={x - 2.5} y={y - 2.5} width="5" height="5" />
        ))}
      </g>
      <circle cx="844" cy="514" r="2" fill="#111" />

      <g stroke="#333">
        <path d="M508 683v26M511 712h22M505.500 709.500h5v5h-5z" />
        <path d="M509 673l3 4 3-4M512 677v4M536 704l6 7M542 704l-6 7" />
      </g>
    </svg>
  );
}

/* ---------- properties palette ---------- */

type Row = { name: string; value: string; dim?: boolean; mark?: "red" | "line" };
const SECTIONS: { title: string; rows: Row[] }[] = [
  {
    title: "General",
    rows: [
      { name: "Color", value: "Red", mark: "red" },
      { name: "Layer", value: "26Plan Panel" },
      { name: "Linetype", value: "Continu...", mark: "line" },
      { name: "Linetype scale", value: "1" },
      { name: "Plot style", value: "ByColor", dim: true },
      { name: "Lineweight", value: "0.00 mm", mark: "line" },
      { name: "Transparency", value: "0" },
      { name: "Hyperlink", value: "" },
    ],
  },
  { title: "3D Visualization", rows: [{ name: "Material", value: "ByLayer" }] },
  {
    title: "Geometry",
    rows: [
      { name: "Current Vertex", value: "1" },
      { name: "Vertex X", value: "66420.1183" },
      { name: "Vertex Y", value: "-41957.5251" },
      { name: "Vertex Z", value: "821.1038" },
      { name: "Length", value: "259.9862", dim: true },
    ],
  },
  { title: "Misc", rows: [{ name: "Fit/Smooth", value: "None" }, { name: "Closed", value: "Yes" }] },
];

function Properties() {
  return (
    <section aria-label="Properties" className="absolute top-[27px] right-[41px] flex w-[195px] border-2 border-[#262626] bg-[#5b5b5b] text-white">
      <div className="flex w-[13px] shrink-0 flex-col items-center gap-[4px] border-r border-[#3a3a3a] bg-[#4c4c4c] py-[3px]">
        <button aria-label="Close palette">
          <Icon className="size-[6px]"><path d="M2 2l12 12M14 2L2 14" stroke="#fff" strokeWidth="2.500" /></Icon>
        </button>
        <button aria-label="Auto-hide">
          <Icon className="size-[6px]"><path d="M3 1v14M5 8h5M14 3v10l-5-5z" stroke="#fff" strokeWidth="2" /></Icon>
        </button>
        <button aria-label="Palette menu">
          <Icon className="size-[6px]"><path d="M2 2h12v12H2zM2 2l12 12M14 2L2 14" stroke="#ddd" strokeWidth="2" /></Icon>
        </button>
        <span className="mt-auto rotate-180 text-[#b5b5b5] [writing-mode:vertical-rl]">PROPERTIES</span>
        <Icon className="size-[7px]"><path d="M1 1h14v14H1zM5 5h6v6H5zM8 3v10M3 8h10" stroke="#ccc" strokeWidth="1.500" /></Icon>
      </div>
      <div className="min-w-0 flex-1 px-[8px] pt-[6px] pb-[13px] text-[10px]">
        <div className="flex items-center gap-[5px] pl-[3px]">
          <label className="flex h-[15px] w-[124px] items-center border border-[#3c3c3c] bg-[#6a6a6a]">
            <select aria-label="Object type" className="min-w-0 flex-1 appearance-none bg-transparent pl-[2px] text-[11px]">
              <option>3D Polyline</option>
            </select>
            <span className="flex h-full w-[9px] items-center justify-center border-l border-[#4a4a4a]"><Caret className="size-[3px]" /></span>
          </label>
          <button aria-label="Toggle pickadd">
            <Icon className="size-[8px]">
              <path d="M2 4h10v11H2z" fill="#111" />
              <path d="M5 7h4v6H5z" fill="#eee" />
              <path d="M12 0v8M8 4h8" stroke="#2ee04a" strokeWidth="2" />
            </Icon>
          </button>
          <button aria-label="Select objects">
            <Icon className="size-[8px]"><path d="M8 0v5M8 11v5M0 8h5M11 8h5M6 6h4v4H6z" stroke="#eee" strokeWidth="2" /></Icon>
          </button>
          <button aria-label="Quick select">
            <Icon className="size-[8px]">
              <path d="M7 2v12M1 8h10" stroke="#eee" strokeWidth="2.500" />
              <path d="M10 0h6v8h-4z" fill="#f0a020" />
              <path d="M9 11h6v4H9z" fill="#ddd" />
            </Icon>
          </button>
        </div>
        <table className="mt-px w-full table-fixed border-collapse">
          <colgroup>
            <col className="w-[78px]" />
            <col />
          </colgroup>
          {SECTIONS.map((s) => (
            <tbody key={s.title}>
              <tr className="h-[14px]">
                <th colSpan={2} scope="colgroup" className="border-t border-[#5b5b5b] bg-[#444] p-0 text-left leading-[12px]">
                  <span className="flex items-center justify-between px-[4px] text-[11px]">
                    {s.title}
                    <span className="h-px w-[4px] bg-white" />
                  </span>
                </th>
              </tr>
              {s.rows.map((r) => (
                <tr key={r.name} className="h-[14px] leading-[12px]">
                  <th scope="row" className="border-r border-b border-[#525252] p-0 pl-[13px] text-left text-[9px] font-normal">{r.name}</th>
                  <td className={r.dim ? "border-b border-[#525252] p-0 pl-[3px] text-[#b0b0b0]" : "border-b border-[#525252] p-0 pl-[3px]"}>
                    <span className="flex items-center gap-[4px]">
                      {r.mark === "red" && <span className="size-[6px] border border-black bg-[#f00]" />}
                      {r.mark === "line" && <span className="h-px w-[31px] bg-white" />}
                      {r.value}
                    </span>
                  </td>
                </tr>
              ))}
            </tbody>
          ))}
        </table>
      </div>
    </section>
  );
}

function Canvas() {
  return (
    <section className="relative min-w-0 flex-1 bg-white">
      <Drawing />
      <span className="absolute top-[3px] left-[2px] text-[7px] leading-[10px] text-black">[−][Top][2D Wireframe]</span>
      <div className="absolute top-[5px] right-[3px] flex gap-[3px] text-[#333]">
        <button aria-label="Minimize drawing"><Icon className="size-[7px]"><path d="M1 8h14v5H1z" stroke="currentColor" strokeWidth="2" /></Icon></button>
        <button aria-label="Restore drawing"><Icon className="size-[7px]"><path d="M1 5h10v10H1zM5 4V1h10v10h-3M4 10h4M6 8v4" stroke="currentColor" strokeWidth="2" /></Icon></button>
        <button aria-label="Close drawing"><Icon className="size-[7px]"><path d="M1 1h14v14H1zM4 4l8 8M12 4l-8 8" stroke="currentColor" strokeWidth="2" /></Icon></button>
      </div>
      <div className="absolute top-[15px] right-[2px] w-[15px] rounded-[3px] border border-[#cfcfcf] bg-[#f4f4f4]/80">
        <svg viewBox="0 0 13 137" className="block w-full" fill="none" stroke="#dedede" aria-hidden="true">
          <path d="M2 14l5-3 4 2v6l-5 3-4-2zM2 14l4 2 5-3M6 16v6" />
          <circle cx="6.500" cy="33" r="5" />
          <circle cx="6.500" cy="33" r="2" />
          <path d="M6 45h1M1 49h11M3 59l2 4h5l1-7-2-1-1-3-2 1-2-1v5zM2 68l9 9M11 68l-9 9M6 84h1M6.500 90v12M1 96h11M5 92l1.500-2 1.500 2M5 100l1.500 2 1.500-2M6 106h1M1 110h11M2 113h9v12H2zM5 116l3 2-3 2zM2 115h9" />
        </svg>
      </div>
      <Properties />
      <div className="absolute bottom-px left-[158px] flex h-[18px] w-[60%] items-center border border-[#b3b3b3] bg-white">
        <div className="flex h-full w-[34px] items-center justify-around bg-[#6f6f6f]">
          <Icon className="h-[14px] w-[4px]"><path d="M8 -20v56" stroke="#ccc" strokeWidth="8" strokeDasharray="4 5" /></Icon>
          <button aria-label="Close command line"><Icon className="size-[7px]"><path d="M1 1l14 14M15 1L1 15" stroke="#fff" strokeWidth="2.500" /></Icon></button>
          <button aria-label="Customise command line"><Icon className="size-[9px]"><path d="M14 14L7 7" stroke="#fff" strokeWidth="3" /><path d="M2 2l3 3M8 3a3.500 3.500 0 1 0-5 5" stroke="#fff" strokeWidth="2.500" /></Icon></button>
        </div>
        <Icon className="ml-[2px] size-[10px]"><path d="M1 2h14v12H1z" fill="#ddd" stroke="#999" /><path d="M3 5l3 3-3 3M8 11h4" stroke="#444" strokeWidth="1.500" /></Icon>
        <Caret className="ml-[2px] size-[4px] text-[#666]" />
        <input
          aria-label="Command"
          placeholder="Type a command"
          className="ml-[4px] min-w-0 flex-1 bg-transparent font-['DejaVu_Sans_Mono',monospace] text-[9px] text-black italic placeholder:text-[#8a8a8a]"
        />
        <button aria-label="Command history" className="mr-[4px] rotate-180 text-black"><Caret /></button>
      </div>
    </section>
  );
}

/* ---------- bottom bars ---------- */

const SHEET_TABS = ["Model", "Layout1", "Layout2", "ACVM2IGT"];

function SheetTabs() {
  return (
    <div role="tablist" className="flex h-[14px] items-start gap-px border-t border-black bg-[#363636] pl-[7px]">
      {SHEET_TABS.map((t) => (
        <button
          key={t}
          role="tab"
          aria-selected={t === "Model"}
          className="flex h-[12px] items-center rounded-b-[5px] bg-[#5d5d5d] px-[6px] text-[#cfcfcf] aria-selected:bg-[#8b8b8b] aria-selected:px-[7px] aria-selected:font-bold aria-selected:text-white"
        >
          {t}
        </button>
      ))}
      <button aria-label="New layout" className="flex h-[12px] items-center rounded-b-[5px] bg-[#5d5d5d] px-[4px]">
        <Icon className="size-[6px]"><path d="M8 1v14M1 8h14" stroke="#fff" strokeWidth="3" /></Icon>
      </button>
    </div>
  );
}

const WHITE = "#d8d8d8";
const CYAN = "#1086f0";
const Man = ({ color, extra }: { color: string; extra?: boolean }) => (
  <Icon>
    <path d="M8 0l2 5 1 3 4 7h-3l-4-5-4 5H1l4-7 1-3z" fill={color} />
    {extra && <path d="M9 5l5-4M10 8l4-2M2 2l3 3" stroke={color} strokeWidth="1.800" />}
  </Icon>
);
const DownCell = <Caret />;

const CELLS: { name: string; w: string; sep?: boolean; body: ReactNode }[] = [
  { name: "Model space", w: "w-[32px]", sep: true, body: <b className="text-white">MODEL</b> },
  { name: "Grid", w: "w-[15px]", body: <Icon className="size-[10px]"><path d="M0 0h16v16H0z" fill="#aaa" /><path d="M0 4h16M0 8h16M0 12h16M4 0v16M8 0v16M12 0v16" stroke="#8a8a8a" /></Icon> },
  { name: "Snap", w: "w-[16px]", body: <Icon className="size-[10px]"><path d="M1 1v15M6 1v15M11 1v15M15 1v15" stroke="#808080" strokeDasharray="1.500 3" strokeWidth="1.500" /></Icon> },
  { name: "Snap options", w: "w-[10px]", sep: true, body: DownCell },
  { name: "Dynamic input", w: "w-[17px]", sep: true, body: <Icon><path d="M4 2v8M0 6h8" stroke={CYAN} strokeWidth="2" /><path d="M7 9h9v6H3v-3h4z" fill={CYAN} /></Icon> },
  { name: "Ortho", w: "w-[15px]", body: <Icon className="size-[10px]"><path d="M2 0v14h14M2 8h6v6" stroke="#a8a8a8" strokeWidth="1.800" /></Icon> },
  { name: "Polar", w: "w-[15px]", body: <Icon><circle cx="8" cy="8" r="6" stroke={CYAN} strokeWidth="2.200" /><path d="M8 8l6-4M8 8h4" stroke={CYAN} strokeWidth="1.800" /></Icon> },
  { name: "Polar options", w: "w-[10px]", body: DownCell },
  { name: "Isodraft", w: "w-[16px]", body: <Icon><path d="M2 1l12 14M9 0v16" stroke="#b5b5b5" strokeWidth="1.500" /></Icon> },
  { name: "Isodraft options", w: "w-[9px]", body: DownCell },
  { name: "Object tracking", w: "w-[16px]", body: <Icon><path d="M13 2L2 14h13M8 8l4 5" stroke={CYAN} strokeWidth="2.200" /></Icon> },
  { name: "Object snap", w: "w-[16px]", body: <Icon><path d="M3 3h11v11H3z" stroke={CYAN} strokeWidth="2" /><path d="M1 1h5v5H1z" fill="#12c84a" /></Icon> },
  { name: "Snap modes", w: "w-[10px]", sep: true, body: DownCell },
  { name: "Selection cycling", w: "w-[16px]", sep: true, body: <Icon><path d="M1 2l7 1-2 6z" fill={CYAN} /><path d="M4 5h6v5H5z" fill={CYAN} /><path d="M7 8h8v7H7z" fill="#72c64e" /></Icon> },
  { name: "Annotation visibility", w: "w-[17px]", body: <Man color={CYAN} extra /> },
  { name: "Auto scale", w: "w-[15px]", body: <Man color={WHITE} extra /> },
  { name: "Annotation scale", w: "w-[15px]", body: <Man color={WHITE} /> },
  { name: "Scale", w: "w-[21px]", sep: true, body: <span className="flex items-center gap-px text-white">1:1 <Caret /></span> },
  { name: "Workspace settings", w: "w-[17px]", body: <Icon className="size-[10px]"><circle cx="8" cy="8" r="4" stroke="#eee" strokeWidth="3.500" /><path d="M8 0v16M0 8h3M13 8h3M2.500 2.500l2 2M11.500 11.500l2 2M13.500 2.500l-2 2M2.500 13.500l2-2" stroke="#eee" strokeWidth="2" /><circle cx="8" cy="8" r="2" fill="#555" /></Icon> },
  { name: "Workspace options", w: "w-[10px]", sep: true, body: DownCell },
  { name: "Annotation monitor", w: "w-[17px]", sep: true, body: <Icon><path d="M8 2v12M2 8h12" stroke="#f0f0f0" strokeWidth="2" /></Icon> },
  { name: "Isolate objects", w: "w-[16px]", sep: true, body: <Icon><path d="M1 2h6v5H1zM6 10l-2 4h6zM7 5l3 3" stroke={WHITE} strokeWidth="1.500" /><circle cx="12" cy="6" r="3" stroke={WHITE} strokeWidth="1.500" /></Icon> },
  { name: "Hardware acceleration", w: "w-[17px]", sep: true, body: <Icon className="size-[13px]"><circle cx="8" cy="8" r="6.500" fill="#0d58ad" stroke={CYAN} strokeWidth="1.800" /><path d="M7 11l4-4v3l-3 2" stroke={CYAN} strokeWidth="1.500" /></Icon> },
  { name: "Graphics performance", w: "w-[23px]", sep: true, body: <Icon className="size-[13px]"><path d="M1 1h14v13H1z" fill="#fff" /><path d="M2 12l4-7 3 2 5 5" stroke="#222" strokeWidth="1.300" /><path d="M12 8l4 8H8.500z" fill="#f06a20" /></Icon> },
  { name: "Clean screen", w: "w-[15px]", body: <Icon className="size-[11px]"><path d="M1 2h14v11H1z" stroke={WHITE} strokeWidth="1.800" /><path d="M3 5h4v3H3zM9 7h4v4H9z" fill={WHITE} /></Icon> },
  { name: "Customization", w: "w-[14px]", body: <Icon className="size-[11px]"><path d="M0 3h16M0 8h16M0 13h16" stroke="#f0f0f0" strokeWidth="2" /></Icon> },
];

function StatusBar() {
  return (
    <footer className="flex h-[18px] justify-end bg-[#363636]">
      <div className="flex h-full border-y border-l border-[#6a6a6a] bg-[#505050] text-white">
        {CELLS.map((c) => (
          <button
            key={c.name}
            aria-label={c.name}
            className={`flex items-center justify-center ${c.w} ${c.sep ? "border-r border-[#787878]" : ""}`}
          >
            {c.body}
          </button>
        ))}
      </div>
    </footer>
  );
}

/* ---------- laptop ---------- */

function FileTabs() {
  return (
    <div role="tablist" className="flex h-[20px] items-end border-b-2 border-[#4a4a4a] bg-[#333] pl-[10px] text-white">
      <div className="relative flex h-[15px] w-[86px] items-center">
        <svg viewBox="0 0 88 15" preserveAspectRatio="none" className="absolute inset-0 h-full w-full" aria-hidden="true">
          <path d="M0 15q4-1 6-8 2-7 6-7h60q5 0 8 7 3 7 8 8z" fill="#6e6e6e" />
          <path d="M8 3q2-3 5-3h58q4 0 6 3" fill="none" stroke="#929292" />
        </svg>
        <button role="tab" aria-selected="true" className="relative ml-[9px]">MineRPCAD</button>
        <button aria-label="Close MineRPCAD" className="relative mr-[12px] ml-auto">
          <Icon className="size-[5px]"><path d="M1 1l14 14M15 1L1 15" stroke="#ccc" strokeWidth="2" /></Icon>
        </button>
      </div>
      <button aria-label="New drawing" className="mb-px flex h-[12px] w-[14px] items-center justify-center rounded-[4px] bg-[#5a5a5a]">
        <Icon className="size-[6px]"><path d="M8 1v14M1 8h14" stroke="#fff" strokeWidth="3" /></Icon>
      </button>
    </div>
  );
}

function Base() {
  return (
    <svg viewBox="176 765 1248 44" className="block w-full" aria-hidden="true">
      <defs>
        <linearGradient id="deck" x1="0" x2="1" y1="0" y2="0">
          <stop offset="0" stopColor="#cfc8cf" />
          <stop offset="0.010" stopColor="#e4dce4" />
          <stop offset="0.024" stopColor="#97959b" />
          <stop offset="0.400" stopColor="#bdbdbd" />
          <stop offset="0.620" stopColor="#d0d0d0" />
          <stop offset="0.960" stopColor="#b5b5b5" />
          <stop offset="0.985" stopColor="#ececec" />
          <stop offset="1" stopColor="#c4c4c4" />
        </linearGradient>
        <linearGradient id="belly" x1="0" x2="0" y1="0" y2="1">
          <stop offset="0" stopColor="#939393" />
          <stop offset="0.900" stopColor="#474747" />
          <stop offset="1" stopColor="#1c1c1c" />
        </linearGradient>
        <linearGradient id="notch" x1="0" x2="1" y1="0" y2="0">
          <stop offset="0" stopColor="#777" />
          <stop offset="0.150" stopColor="#f0f0f0" />
          <stop offset="0.500" stopColor="#fff" />
          <stop offset="0.850" stopColor="#eee" />
          <stop offset="1" stopColor="#777" />
        </linearGradient>
        <linearGradient id="shade" x1="0" x2="1" y1="0" y2="0">
          <stop offset="0" stopColor="#eee" />
          <stop offset="0.080" stopColor="#b9b9b9" />
          <stop offset="0.920" stopColor="#b9b9b9" />
          <stop offset="1" stopColor="#eee" />
        </linearGradient>
      </defs>
      <path d="M180 804q30-3 60-6h1120q32 2 60 6-40-1-60-1H240q-30 0-60 1z" fill="url(#shade)" />
      <path d="M182 779H1409q-30 21-76 21H246q-40-1-64-21z" fill="url(#belly)" />
      <path d="M182 765H1409v14H182z" fill="url(#deck)" />
      <path d="M182 765.500H1409" stroke="#e4e4e4" />
      <path d="M182 777.500H1409" stroke="#909090" />
      <path d="M182 778.500H1409" stroke="#d5d5d5" />
      <path d="M182.500 765v14" stroke="#222" />
      <path d="M1408.500 765v14" stroke="#444" />
      <path d="M671 765H923q-16 12-48 12H719q-32 0-48-12z" fill="url(#notch)" />
    </svg>
  );
}

export default function App() {
  return (
    <main className="min-h-screen bg-white pt-[157px] font-['Roboto_Condensed','Noto_Sans',sans-serif] text-[9px] leading-[11px]">
      <div className="mx-auto w-[78%] min-w-[1248px]">
        <div className="ml-[9.2%] w-[80.9%] rounded-t-[8px] border border-b-0 border-black bg-linear-to-b from-[#353535] to-[#131313] px-[13px] pb-[10px]">
          <div className="flex h-[20px] items-center justify-center">
            <span className="size-[4px] rounded-full bg-[#4c4c4c]" />
          </div>
          <div className="overflow-hidden">
            <Header />
            <Ribbon />
            <FileTabs />
            <div className="flex min-h-[427px]">
              <DataLoader />
              <SideTabs />
              <Canvas />
            </div>
            <SheetTabs />
            <StatusBar />
          </div>
        </div>
        <Base />
      </div>
    </main>
  );
}
